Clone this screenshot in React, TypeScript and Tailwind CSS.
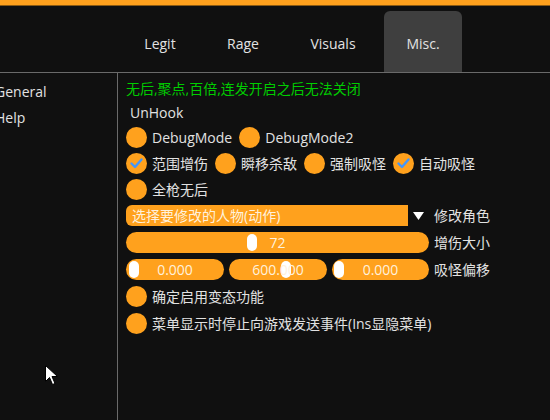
import React from 'react';

const tabs = [
  { name: 'Legit', w: 'w-[64px]' },
  { name: 'Rage', w: 'w-[78px]' },
  { name: 'Visuals', w: 'w-[78px]' },
  { name: 'Misc.', w: 'w-[78px]', active: true },
];

const Check = ({ on }: { on?: boolean }) => (
  <div className="w-[21px] h-[21px] rounded-full bg-[#ffa11d] shrink-0 flex items-center justify-center">
    {on && (
      <svg width="15" height="15" viewBox="0 0 15 15">
        <polyline points="2.5,7.5 6,11 12.5,3.5" fill="none" stroke="#4296fa" strokeWidth="2.4" strokeLinecap="round" strokeLinejoin="round" />
      </svg>
    )}
  </div>
);

const Box = ({ label, on }: { label: string; on?: boolean }) => (
  <div className="flex items-center gap-[5px]">
    <Check on={on} />
    <span>{label}</span>
  </div>
);

const Slider = ({ value, thumb, className }: { value: string; thumb: number; className: string }) => (
  <div className={`relative h-[21px] rounded-full bg-[#ffa11d] flex items-center justify-center ${className}`}>
    <div className="absolute top-[2px] w-[10px] h-[17px] rounded-[5px] bg-white" style={{ left: thumb }} />
    <span className="relative text-[#fff1dc]">{value}</span>
  </div>
);

export default function App() {
  return (
    <div className="relative w-[550px] h-[420px] overflow-hidden bg-[#101010] text-[14px] text-[#e2e2e2] font-['Open_Sans','Noto_Sans_CJK_SC',sans-serif]">
      <div className="h-[5px] bg-[#ffa11d]" />
      <div className="h-[1px] bg-[#8a5a14]" />
      <div className="h-[66px] flex items-end pl-[128px] gap-[12px]">
        {tabs.map((t) => (
          <div
            key={t.name}
            className={`${t.w} h-[61px] rounded-t-[6px] flex items-center justify-center pt-[3px] ${t.active ? 'bg-[#3f3f3f]' : ''}`}
          >
            {t.name}
          </div>
        ))}
      </div>
      <div className="h-[1px] bg-[#6a6a6a]" />
      <div className="flex h-[347px]">
        <div className="w-[118px] shrink-0 border-r border-[#6a6a6a] pt-[5px]">
          <div className="h-[26px] flex items-center -ml-[5px]">General</div>
          <div className="h-[26px] flex items-center -ml-[5px]">Help</div>
        </div>
        <div className="flex-1 pl-[8px] pt-[3px] flex flex-col">
          <div className="h-[24px] flex items-center text-[#00cc00]">无后,聚点,百倍,连发开启之后无法关闭</div>
          <div className="h-[24px] flex items-center pl-[4px]">UnHook</div>
          <div className="h-[26px] flex items-center gap-[7px]">
            <Box label="DebugMode" />
            <Box label="DebugMode2" />
          </div>
          <div className="h-[26px] flex items-center gap-[7px]">
            <Box label="范围增伤" on />
            <Box label="瞬移杀敌" />
            <Box label="强制吸怪" />
            <Box label="自动吸怪" on />
          </div>
          <div className="h-[26px] flex items-center">
            <Box label="全枪无后" />
          </div>
          <div className="h-[27px] flex items-center">
            <div className="w-[282px] h-[21px] rounded-l-[6px] bg-[#ffa11d] flex items-center pl-[6px] text-[#fff1dc]">
              选择要修改的人物(动作)
            </div>
            <div className="w-[21px] h-[21px] flex items-center justify-center">
              <svg width="11" height="8" viewBox="0 0 11 8">
                <polygon points="0,0 11,0 5.5,8" fill="#ffffff" />
              </svg>
            </div>
            <span className="ml-[5px]">修改角色</span>
          </div>
          <div className="h-[27px] flex items-center">
            <Slider value="72" thumb={121} className="w-[303px]" />
            <span className="ml-[5px]">增伤大小</span>
          </div>
          <div className="h-[27px] flex items-center">
            <div className="flex gap-[5px]">
              <Slider value="0.000" thumb={3} className="w-[98px]" />
              <Slider value="600.000" thumb={52} className="w-[98px]" />
              <Slider value="0.000" thumb={2} className="w-[97px]" />
            </div>
            <span className="ml-[5px]">吸怪偏移</span>
          </div>
          <div className="h-[27px] flex items-center">
            <Box label="确定启用变态功能" />
          </div>
          <div className="h-[26px] flex items-center">
            <Box label="菜单显示时停止向游戏发送事件(Ins显隐菜单)" />
          </div>
        </div>
      </div>
      <svg className="absolute left-[45px] top-[365px]" width="13" height="21" viewBox="0 0 13 21">
        <path d="M0.5,0.5 L0.5,16.5 L4.5,12.5 L7.5,19.5 L10,18.5 L7,11.5 L12.5,11.5 Z" fill="#ffffff" stroke="#000000" strokeWidth="1" />
      </svg>
    </div>
  );
}
